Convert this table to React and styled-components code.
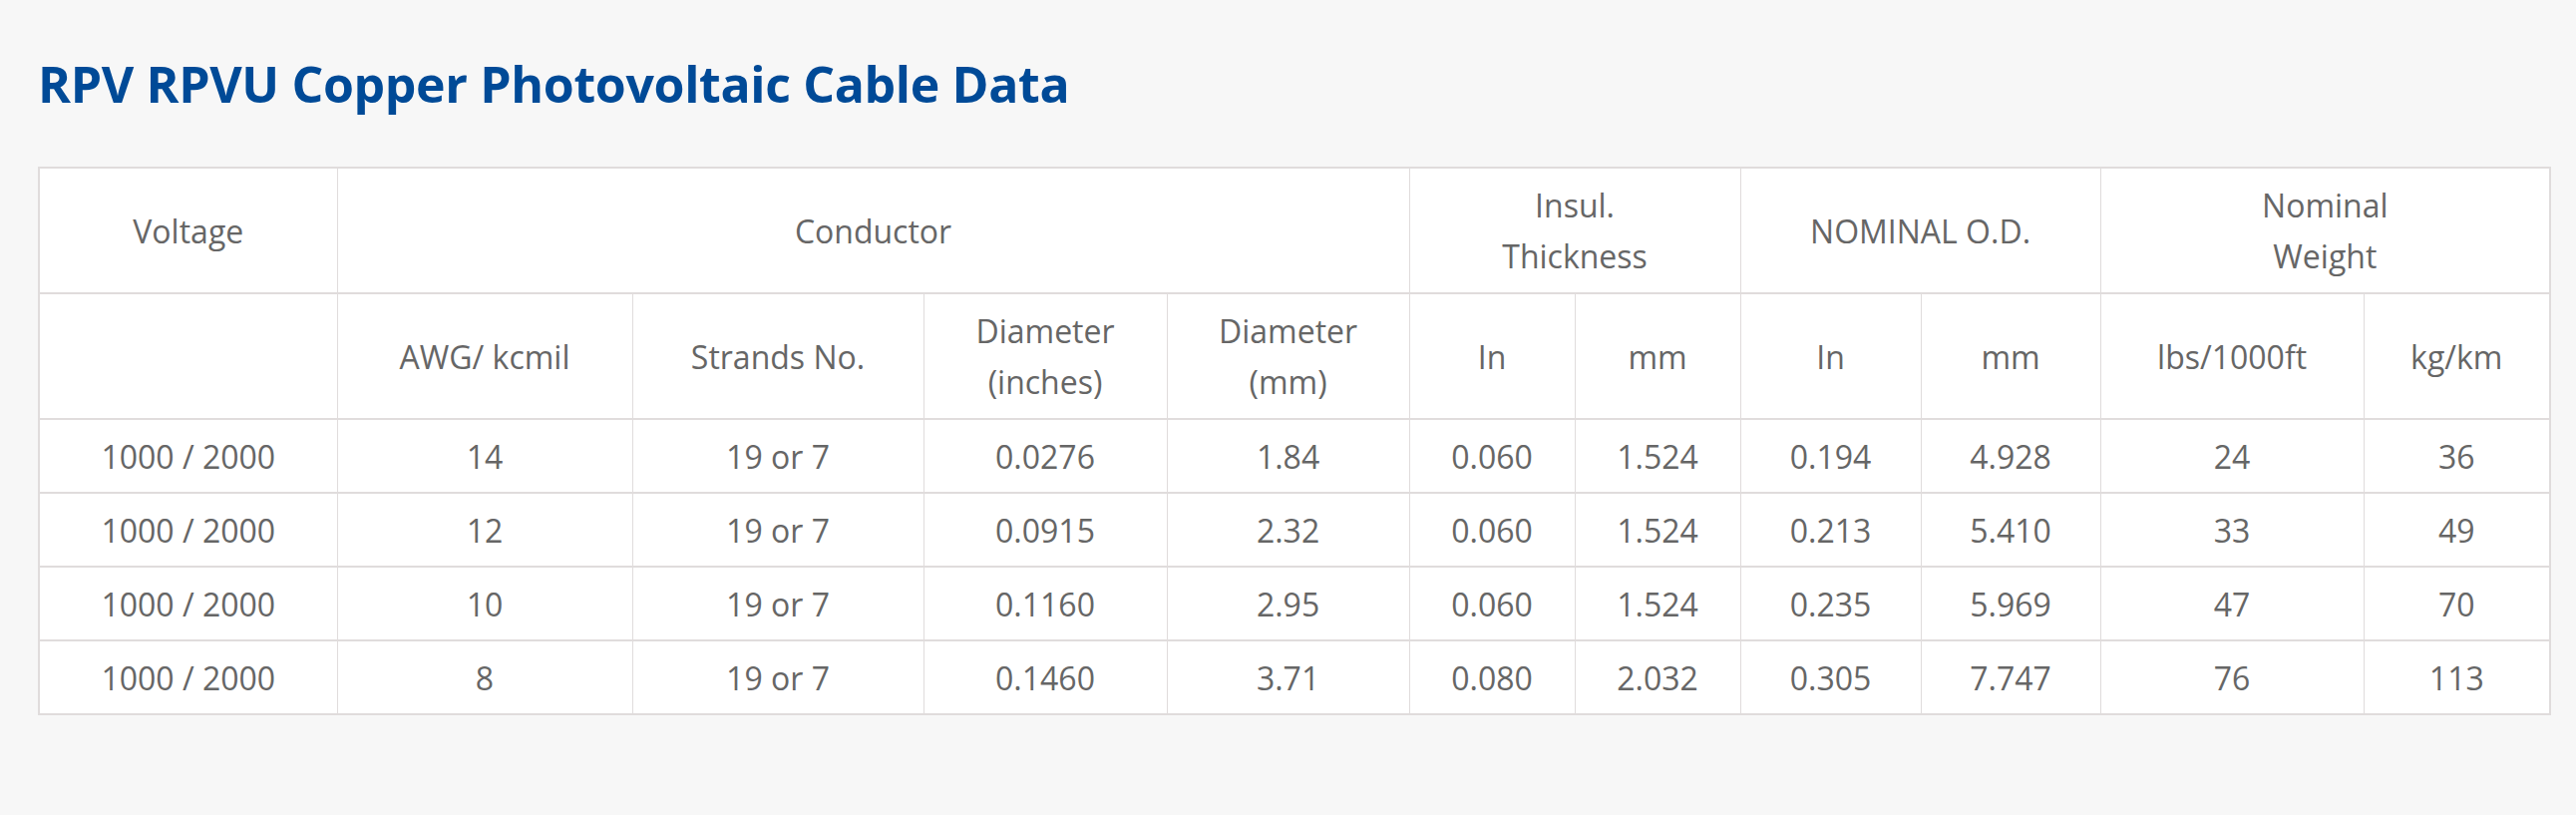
import React from "react";
import styled, { createGlobalStyle } from "styled-components";

const Global = createGlobalStyle`
  html, body { margin: 0; padding: 0; background: #f7f7f7; }
  body { font-family: "Open Sans", "Noto Sans", sans-serif; }
`;

const Page = styled.div`
  padding: 48px 27px 80px 38px;
  background: #f7f7f7;
`;

const Title = styled.h2`
  margin: 0 0 47px 0;
  font-family: "Open Sans", "Noto Sans", sans-serif;
  font-size: 50px;
  line-height: 72px;
  font-weight: 700;
  color: #004a97;
  letter-spacing: -0.35px;
`;

const Table = styled.table`
  width: 2518px;
  border-collapse: collapse;
  table-layout: fixed;
  background: #fff;
  border: 2px solid #e0dcdc;
`;

const Row = styled.tr`
  height: ${(p) => p.$h}px;
`;

const Cell = styled.td`
  border-top: 2px solid #e0dcdc;
  border-bottom: 2px solid #e0dcdc;
  border-left: 1px solid #e0dcdc;
  border-right: 1px solid #e0dcdc;
  &:first-child { border-left: 2px solid #e0dcdc; }
  &:last-child { border-right: 2px solid #e0dcdc; }
  padding: 0 10px;
  text-align: center;
  vertical-align: middle;
  font-size: 32px;
  line-height: 51px;
  color: #666;
  font-family: "Open Sans", "Noto Sans", sans-serif;
`;

const widths = [299, 296, 292, 244, 243, 166, 166, 181, 180, 264, 187];

const data = [
  ["1000 / 2000", "14", "19 or 7", "0.0276", "1.84", "0.060", "1.524", "0.194", "4.928", "24", "36"],
  ["1000 / 2000", "12", "19 or 7", "0.0915", "2.32", "0.060", "1.524", "0.213", "5.410", "33", "49"],
  ["1000 / 2000", "10", "19 or 7", "0.1160", "2.95", "0.060", "1.524", "0.235", "5.969", "47", "70"],
  ["1000 / 2000", "8", "19 or 7", "0.1460", "3.71", "0.080", "2.032", "0.305", "7.747", "76", "113"],
];

export default function App() {
  return (
    <>
      <Global />
      <Page>
        <Title>RPV RPVU Copper Photovoltaic Cable Data</Title>
        <Table>
          <colgroup>
            {widths.map((w, i) => (
              <col key={i} style={{ width: w }} />
            ))}
          </colgroup>
          <tbody>
            <Row $h={126}>
              <Cell>Voltage</Cell>
              <Cell colSpan={4}>Conductor</Cell>
              <Cell colSpan={2}>
                Insul.
                <br />
                Thickness
              </Cell>
              <Cell colSpan={2}>NOMINAL O.D.</Cell>
              <Cell colSpan={2}>
                Nominal
                <br />
                Weight
              </Cell>
            </Row>
            <Row $h={126}>
              <Cell></Cell>
              <Cell>AWG/ kcmil</Cell>
              <Cell>Strands No.</Cell>
              <Cell>
                Diameter
                <br />
                (inches)
              </Cell>
              <Cell>
                Diameter
                <br />
                (mm)
              </Cell>
              <Cell>In</Cell>
              <Cell>mm</Cell>
              <Cell>In</Cell>
              <Cell>mm</Cell>
              <Cell>lbs/1000ft</Cell>
              <Cell>kg/km</Cell>
            </Row>
            {data.map((r, i) => (
              <Row key={i} $h={74}>
                {r.map((v, j) => (
                  <Cell key={j}>{v}</Cell>
                ))}
              </Row>
            ))}
          </tbody>
        </Table>
      </Page>
    </>
  );
}
